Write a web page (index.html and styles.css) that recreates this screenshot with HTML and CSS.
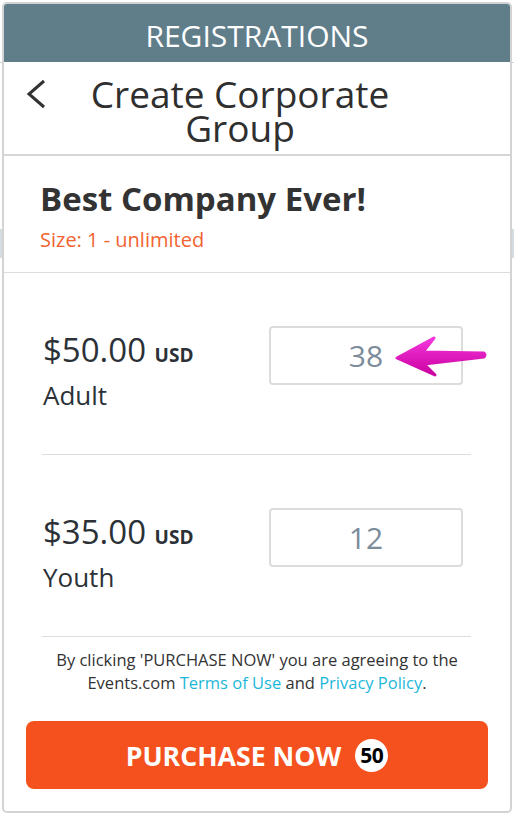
FILE: index.html
```html
<!DOCTYPE html>
<html lang="en-us">
<head>
  <meta charset="utf-8">
  <title>Registrations</title>
  <link rel="stylesheet" href="styles.css">
</head>
<body>

  <div class="card">
    <div class="bar">REGISTRATIONS</div>

    <div class="title-row">
      <svg class="back" width="24" height="33" viewBox="0 0 24 33">
        <polyline points="20,4 5,17 20,30" fill="none" stroke="#333" stroke-width="3"/>
      </svg>
      <h1>Create Corporate Group</h1>
    </div>

    <div class="group">
      <h2>Best Company Ever!</h2>
      <p class="size">Size: 1 - unlimited</p>
    </div>

    <div class="ticket">
      <div class="ticket-inner">
        <div class="info">
          <div class="price">$50.00 <span>USD</span></div>
          <div class="type">Adult</div>
        </div>
        <div class="qty">
          <input type="text" value="38">
          <svg class="pointer" width="100" height="46" viewBox="0 0 100 46">
            <defs>
              <linearGradient id="pink" x1="0" y1="0" x2="0" y2="1">
                <stop offset="0" stop-color="#f437dc"/>
                <stop offset="1" stop-color="#c9009f"/>
              </linearGradient>
            </defs>
            <polygon points="5,25 42,5 31,19 92,20 93,22 92,24 32,31 43,42"
              fill="url(#pink)" stroke="url(#pink)" stroke-width="3" stroke-linejoin="round"/>
          </svg>
        </div>
      </div>
    </div>

    <div class="ticket">
      <div class="ticket-inner">
        <div class="info">
          <div class="price">$35.00 <span>USD</span></div>
          <div class="type">Youth</div>
        </div>
        <div class="qty">
          <input type="text" value="12">
        </div>
      </div>
    </div>

    <div class="footer">
      <p class="terms">By clicking 'PURCHASE NOW' you are agreeing to the Events.com <a href="#">Terms of Use</a> and <a href="#">Privacy Policy</a>.</p>
      <button class="buy">PURCHASE NOW <span class="badge">50</span></button>
    </div>
  </div>

</body>
</html>
```

FILE: styles.css
```css
* {
  box-sizing: border-box;
}
body {
  margin: 0;
  font-family: "Open Sans", "Noto Sans", sans-serif;
  color: #333;
  background:
    linear-gradient(to bottom, transparent 62px, #cfcfcf 62px, #cfcfcf 63px, transparent 63px),
    linear-gradient(to bottom, transparent 229px, #d3dde1 229px, #d3dde1 258px, transparent 258px);
  background-color: #fff;
}
.card {
  width: 510px;
  height: 811px;
  margin: 2px 2px 0 2px;
  border: 2px solid #d3d3d3;
  border-radius: 5px;
  overflow: hidden;
  background-color: #fff;
  display: flex;
  flex-direction: column;
}
.bar {
  height: 58px;
  padding-top: 6px;
  background-color: #607e8a;
  color: #fff;
  font-size: 30px;
  line-height: 52px;
  text-align: center;
  flex-shrink: 0;
}
.title-row {
  display: flex;
  align-items: flex-start;
  padding: 15px 0 9px 20px;
  border-bottom: 2px solid #d6d6d6;
  flex-shrink: 0;
}
.back {
  flex-shrink: 0;
}
h1 {
  flex: 1;
  margin: 0 78px 0 0;
  font-size: 37px;
  font-weight: normal;
  line-height: 34px;
  text-align: center;
  color: #2f2f2f;
}
.group {
  padding: 23px 36px 19px;
  border-bottom: 1px solid #ddd;
  flex-shrink: 0;
}
h2 {
  margin: 0;
  font-size: 33px;
  line-height: 40px;
  font-weight: bold;
  color: #333;
}
.size {
  margin: 8px 0 0;
  font-size: 20px;
  line-height: 26px;
  color: #f26331;
}
.ticket {
  flex-shrink: 0;
  padding: 0 39px 0 38px;
}
.ticket-inner {
  display: flex;
  justify-content: space-between;
  align-items: flex-start;
  padding: 53px 8px 41px 0;
  border-bottom: 1px solid #ddd;
}
.info {
  margin-top: 4px;
  padding-left: 1px;
  color: #2b3137;
}
.price {
  font-size: 33px;
  line-height: 40px;
}
.price span {
  font-size: 19px;
  font-weight: bold;
}
.type {
  margin-top: 2px;
  font-size: 26px;
  line-height: 36px;
}
.qty {
  position: relative;
  height: 59px;
}
.qty input {
  display: block;
  width: 194px;
  height: 59px;
  border: 2px solid #dcdcdc;
  border-radius: 4px;
  font-family: "Open Sans", sans-serif;
  font-size: 30px;
  color: #7c8c9b;
  text-align: center;
  padding: 0;
  outline: none;
}
.pointer {
  position: absolute;
  left: 123px;
  top: 7px;
}
.footer {
  flex: 1;
  padding: 12px 22px 22px;
  display: flex;
  flex-direction: column;
}
.terms {
  margin: 0;
  font-size: 16.5px;
  line-height: 22.5px;
  text-align: center;
  color: #333;
}
.terms a {
  color: #1bb7da;
  text-decoration: none;
}
.buy {
  margin-top: 27px;
  height: 68px;
  border: none;
  border-radius: 8px;
  background-color: #f4511e;
  color: #fff;
  font-family: "Open Sans", sans-serif;
  font-size: 26.7px;
  font-weight: bold;
  display: flex;
  align-items: center;
  justify-content: center;
  gap: 14px;
  padding: 0;
}
.badge {
  width: 33px;
  height: 33px;
  border-radius: 50%;
  background-color: #fff;
  color: #000;
  font-size: 21px;
  line-height: 33px;
  text-align: center;
  letter-spacing: -0.5px;
}
```
